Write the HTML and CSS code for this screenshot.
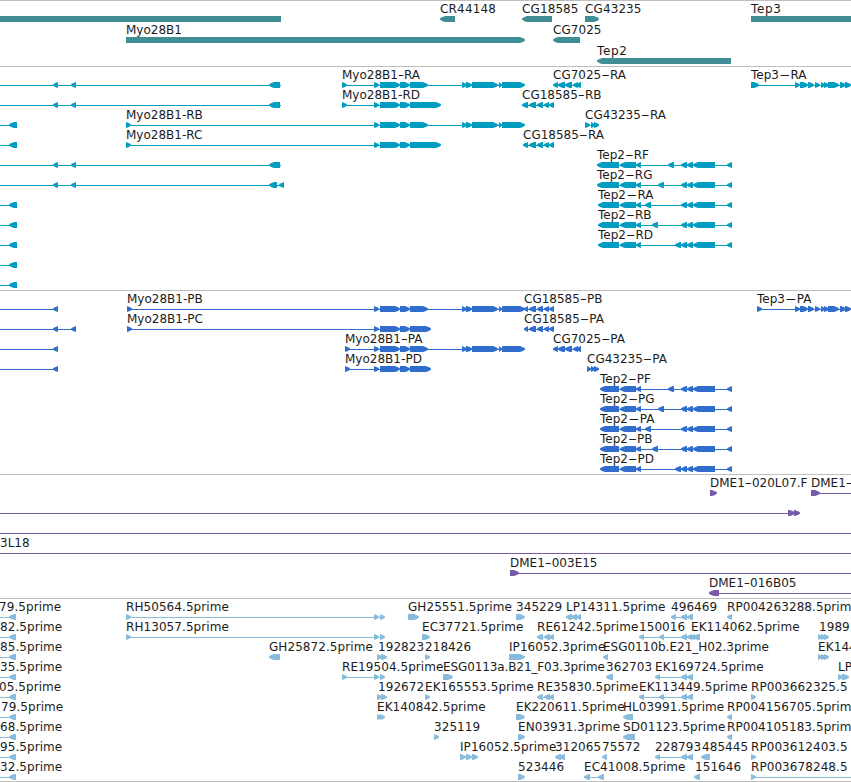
FILE: index.html
```
<!DOCTYPE html>
<html lang="en">
<head>
<meta charset="utf-8">
<title>Genome tracks</title>
<link rel="stylesheet" href="styles.css">
</head>
<body>
<main class="browser" id="browser"></main>
<script src="tracks.js"></script>
</body>
</html>
```
FILE: styles.css
```
body {
  margin: 0;
  background: #fff;
  overflow: hidden;
}

.browser {
  display: flex;
  flex-direction: column;
  width: 851px;
  height: 782px;
  overflow: hidden;
}

.track {
  flex: none;
  display: flex;
  flex-direction: column;
  padding: 1px 0 2px;
  border-top: 1px solid #bfbfbf;
}

.track.gene {
  padding-bottom: 1px;
}

.track.est {
  padding-bottom: 1px;
  border-bottom: 1px solid #bfbfbf;
}

.row {
  flex: none;
  display: block;
  width: 851px;
  height: 20px;
}

.gene .row {
  height: 21px;
}

.gene { color: #408e94; }
.transcript { color: #009dc0; }
.protein { color: #316dcd; }
.clone { color: #775aa9; }
.est { color: #89bbdd; }

.label {
  font: 12px "DejaVu Sans", sans-serif;
  fill: #1c1c1c;
}

.est .label {
  letter-spacing: 0.07px;
}

.shape {
  fill: currentColor;
}
```
FILE: tracks.js
```
// A feature is [label, labelX, direction, lineStart, lineEnd, blocks].
// Direction is 1 (forward), -1 (reverse) or 0 (plain bar).
const T = 851;
const END = [[462,467],[466,472],[472,498],[499,502],[502,525]];
const HEAD = [[374,379],[380,400],[400,410]];
const myoFull = (l, x) => [l, x, 1, x, 525, [[x,x+5], ...HEAD, [410,428], ...END]];
const myoShort = (l, x, e) => [l, x, 1, x, e, [[x,x+5], ...HEAD, [410,e]]];
const cg18 = (l, x) => [l, x, -1, x, 554, [[x,528],[529,536],[537,543],[544,549],[549,554]]];
const cg70 = l => [l, 553, -1, 553, 581, [[553,558],[558,565],[565,572],[573,578],[576,581]]];
const tep2 = (l, x, m) => [l, x, -1, x, 732, [[x,619],[620,636],[636,641],[m,m+6],[681,687],[687,693],[693,715],[727,732]]];
const tep3 = (l, x, w) => [l, x, 1, x, T, [[x,x+w],[795,800],[800,808],[808,814],[815,820],[821,825],[824,829],[828,839],[840,846],[845,851]]];
const left = (e, ...b) => ['', 0, -1, 0, e, b];
const near = () => left(17, [9,17]);
const one = (l, x, d, e, ax = x) => [l, x, d, ax, ax, [[ax,e]]];
const edge = (l, x) => [l, x, -1, 0, 16, [[9,16]]];
const re = l => [l, 537, -1, 537, 554, [[537,543],[544,550],[549,554]]];

const tracks = [
  ['gene', [
    [['', 0, 0, 0, 0, [[0,281]]], one('CR44148',440,-1,455), one('CG18585',522,-1,552), one('CG43235',585,1,599), ['Tep3',751,0,0,0,[[751,T]]]],
    [one('Myo28B1',126,1,525), one('CG7025',553,-1,580)],
    [one('Tep2',597,-1,731)]
  ]],
  ['transcript', [
    [left(281,[53,58],[71,76],[269,280]), myoFull('Myo28B1-RA',342), cg70('CG7025-RA'), tep3('Tep3-RA',751,8)],
    [left(281,[53,58],[71,76],[269,280]), myoShort('Myo28B1-RD',342,441), cg18('CG18585-RB',522)],
    [near(), myoFull('Myo28B1-RB',126), ['CG43235-RA',585,1,585,599,[[585,590],[591,595],[594,599]]]],
    [near(), myoShort('Myo28B1-RC',126,441), cg18('CG18585-RA',523)],
    [left(281,[53,58],[71,76],[269,280]), tep2('Tep2-RF',597,668)],
    [left(284,[53,58],[71,76],[269,277],[279,284]), tep2('Tep2-RG',597,658)],
    [near(), tep2('Tep2-RA',598,645)],
    [near(), tep2('Tep2-RB',598,652)],
    [near(), tep2('Tep2-RD',598,675)],
    [near()],
    [near()]
  ]],
  ['protein', [
    [left(58,[53,58]), myoFull('Myo28B1-PB',127), cg18('CG18585-PB',524), tep3('Tep3-PA',757,5)],
    [left(76,[53,58],[71,76]), myoShort('Myo28B1-PC',127,431), cg18('CG18585-PA',524)],
    [left(58,[53,58]), myoFull('Myo28B1-PA',345), cg70('CG7025-PA')],
    [left(58,[53,58]), myoShort('Myo28B1-PD',345,431), ['CG43235-PA',587,1,587,599,[[587,591],[591,595],[594,599]]]],
    [tep2('Tep2-PF',600,668)],
    [tep2('Tep2-PG',600,658)],
    [tep2('Tep2-PA',600,645)],
    [tep2('Tep2-PB',600,652)],
    [tep2('Tep2-PD',600,675)]
  ]],
  ['clone', [
    [one('DME1-020L07.F',710,1,717), ['DME1-',811,1,811,T,[[811,820]]]],
    [['',0,1,0,800,[[788,795],[794,800]]]],
    [['',0,1,0,T,[]]],
    [['3L18',0,1,0,T,[]]],
    [['DME1-003E15',510,1,510,T,[[510,519]]]],
    [['DME1-016B05',709,-1,709,T,[[709,719]]]]
  ]],
  ['est', [
    [edge('79.5prime',-1), ['RH50564.5prime',126,1,126,385,[[126,131],[374,379],[380,385]]], one('GH25551.5prime',408,1,419), one('345229',516,1,525), ['LP14311.5prime',566,-1,566,581,[[566,572],[571,577],[576,581]]], ['496469',671,-1,671,693,[[671,676],[681,687],[687,693]]], one('RP004263288.5prim',727,-1,732)],
    [edge('82.5prime',0), ['RH13057.5prime',126,1,126,385,[[126,131],[374,379],[380,385]]], one('EC37721.5prime',422,1,430), re('RE61242.5prime'), ['150016',639,-1,639,688,[[639,644],[659,664],[681,687]]], ['EK114062.5prime',691,-1,687,700,[[687,692],[690,695],[693,700]]], ['1989',819,1,818,829,[[818,822],[821,826],[824,829]]]],
    [edge('85.5prime',0), one('GH25872.5prime',269,-1,280), ['192823',378,1,377,387,[[377,382],[381,387]]], one('218426',425,1,430), one('IP16052.3prime',509,1,525), one('ESG0110b.E21_H02.3prime',603,-1,608), ['EK144',818,1,818,829,[[818,822],[821,826],[824,829]]]],
    [edge('35.5prime',0), ['RE19504.5prime',342,1,342,385,[[342,347],[374,379],[380,385]]], one('ESG0113a.B21_F03.3prime',443,1,453), one('362703',606,-1,613), ['EK169724.5prime',655,-1,655,693,[[655,660],[681,687],[687,693]]], ['LP',838,1,838,849,[[838,843],[842,849]]]],
    [edge('05.5prime',-1), ['192672',378,1,377,387,[[377,382],[381,387]]], one('EK165553.5prime',425,1,430), re('RE35830.5prime'), ['EK113449.5prime',639,-1,639,693,[[639,644],[659,664],[681,687],[687,693]]], one('RP003662325.5',751,1,756)],
    [edge('79.5prime',1), ['EK140842.5prime',377,1,377,385,[[377,382],[380,385]]], one('EK220611.5prime',516,1,525), one('HL03991.5prime',623,-1,633), one('RP004156705.5prim',727,-1,732)],
    [edge('68.5prime',0), one('325119',434,1,439), one('EN03931.3prime',518,1,525), one('SD01123.5prime',623,-1,635), one('RP004105183.5prim',727,-1,732)],
    [edge('95.5prime',0), ['IP16052.5prime',460,1,460,478,[[460,466],[466,472],[472,478]]], ['312065',555,-1,555,565,[[555,561],[559,565]]], one('75572',602,-1,607), ['228793',655,-1,655,693,[[655,660],[681,687],[687,693]]], one('485445',702,-1,710,701), one('RP003612403.5',751,1,756)],
    [edge('32.5prime',0), one('523446',518,1,525), ['EC41008.5prime',584,-1,584,604,[[584,590],[598,604]]], one('151646',695,-1,700,694), ['RP003678248.5',751,1,751,T,[[751,756]]]]
  ]]
];

// Label widths in pixels, where they differ from the natural text width.
const widths = {
  'CR44148': 56, 'CG18585': 56.5, 'CG43235': 56.5, 'CG7025': 48.5, 'Tep2': 30, 'Tep3': 30,
  'Myo28B1-RA': 78, 'Myo28B1-RD': 78, 'Myo28B1-PA': 77.5, 'Myo28B1-PD': 77,
  'CG7025-RA': 73, 'CG18585-RB': 79.5, 'CG18585-RA': 81, 'CG43235-RA': 81,
  'CG18585-PB': 78.5, 'CG18585-PA': 80, 'CG7025-PA': 72, 'CG43235-PA': 80,
  'Tep3-RA': 55.5, 'Tep3-PA': 54.5,
  'Tep2-RF': 52, 'Tep2-RG': 55.5, 'Tep2-RA': 55.5, 'Tep2-RB': 53.5, 'Tep2-RD': 55,
  'Tep2-PF': 51, 'Tep2-PG': 54.5, 'Tep2-PA': 54.5, 'Tep2-PB': 52.5, 'Tep2-PD': 54,
  'DME1-020L07.F': 97.5, 'DME1-003E15': 87.5, 'DME1-016B05': 87.5, 'DME1-': 41,
  'ESG0113a.B21_F03.3prime': 162, 'ESG0110b.E21_H02.3prime': 166,
  'EK144': 39
};

// Arrow block with a pointed, slightly rounded tip on the side of the strand.
function block(dir, a, b) {
  const tip = Math.min(5, b - a);
  if (dir > 0) return `M${a} 14H${b - tip}Q${b - 1.5} 15 ${b} 16.5V17.5Q${b - 1.5} 19 ${b - tip} 20H${a}Z`;
  if (dir < 0) return `M${b} 14H${a + tip}Q${a + 1.5} 15 ${a} 16.5V17.5Q${a + 1.5} 19 ${a + tip} 20H${b}Z`;
  return `M${a} 14H${b}V20H${a}Z`;
}

function feature([text, x, dir, l1, l2, blocks]) {
  let out = l2 > l1 ? `<path class="shape" d="M${l1} 17H${l2}V18H${l1}Z"/>` : '';
  out += blocks.map(([a, b]) => `<path class="shape" d="${block(dir, a, b)}"/>`).join('');
  if (text) {
    const wide = widths[text] && text.includes('-');
    const fit = widths[text] && !wide ? ` textLength="${widths[text]}"` : '';
    const body = wide ? text.replace('-', '<tspan>-</tspan>') : text;
    out += `<text class="label" x="${x}" y="11"${fit}>${body}</text>`;
  }
  return out;
}

document.getElementById('browser').innerHTML = tracks.map(([name, rows]) =>
  `<section class="track ${name}">` +
  rows.map(r => `<svg class="row">${r.map(feature).join('')}</svg>`).join('') +
  '</section>').join('');

// Stretch the dash of isoform names so that the whole name fills its width.
document.querySelectorAll('.label tspan').forEach(dash => {
  const label = dash.parentNode;
  const extra = widths[label.textContent] - label.getComputedTextLength();
  if (extra > 0) {
    dash.setAttribute('textLength', dash.getComputedTextLength() + extra);
    dash.setAttribute('lengthAdjust', 'spacingAndGlyphs');
  }
});
```
